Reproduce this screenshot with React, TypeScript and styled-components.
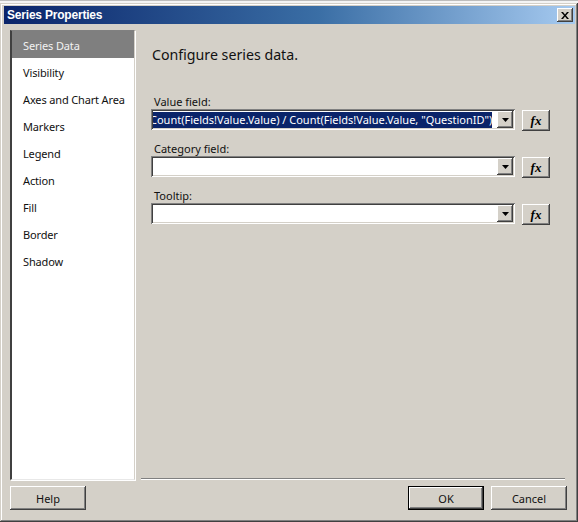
import React from "react";
import styled, { createGlobalStyle } from "styled-components";

const Global = createGlobalStyle`
  html, body { margin: 0; padding: 0; background: #ffffff; }
  body { font-family: "Noto Sans", "Liberation Sans", sans-serif; }
  * { box-sizing: border-box; }
`;

const TopStrip = styled.div`
  height: 3px;
  background: #f4f4f4;
  border-top: 1px solid #bdbdbd;
`;

const Window = styled.div`
  width: 578px;
  height: 519px;
  background: #d4d0c8;
  padding: 3px 3px 4px 4px;
  display: flex;
  flex-direction: column;
  box-shadow: inset -1px -1px #404040, inset 1px 1px #d4d0c8,
    inset -2px -2px #808080, inset 2px 2px #ffffff;
`;

const TitleBar = styled.div`
  height: 18px;
  flex: none;
  display: flex;
  align-items: center;
  justify-content: space-between;
  padding: 0 2px 0 3px;
  background: linear-gradient(to right, #0a246a 0%, #3a6ea5 55%, #a6caf0 100%);
`;

const Title = styled.span`
  color: #ffffff;
  font-family: "Liberation Sans", Arial, sans-serif;
  font-weight: bold;
  font-size: 12px;
  letter-spacing: -0.2px;
`;

const CloseBtn = styled.div`
  width: 16px;
  height: 14px;
  background: #d4d0c8;
  display: flex;
  align-items: center;
  justify-content: center;
  box-shadow: inset -1px -1px #404040, inset 1px 1px #ffffff,
    inset -2px -2px #808080;
`;

const Body = styled.div`
  flex: 1;
  display: flex;
  flex-direction: column;
  padding: 6px 0 0 6px;
`;

const Top = styled.div`
  height: 450px;
  display: flex;
`;

const Nav = styled.div`
  width: 125px;
  height: 450px;
  background: #ffffff;
  border-top: 1px solid #808080;
  border-left: 2px solid #404040;
  border-right: 1px solid #d4d0c8;
  border-bottom: 1px solid #e8e8e8;
  box-shadow: 1px 1px 0 #ffffff;
  display: flex;
  flex-direction: column;
`;

const NavItem = styled.div<{ $selected?: boolean }>`
  height: 27px;
  display: flex;
  align-items: center;
  padding: 2px 0 0 11px;
  font-size: 11px;
  letter-spacing: -0.15px;
  color: ${(p) => (p.$selected ? "#f2f2f2" : "#111111")};
  background: ${(p) => (p.$selected ? "#7f7f7f" : "transparent")};
`;

const Content = styled.div`
  flex: 1;
  display: flex;
  flex-direction: column;
  padding-left: 16px;
`;

const Heading = styled.div`
  font-size: 14.2px;
  color: #111111;
  margin: 15px 0 0 1px;
  height: 24px;
`;

const Fields = styled.div`
  margin-top: 24px;
  display: flex;
  flex-direction: column;
`;

const Label = styled.div`
  font-size: 11px;
  color: #111111;
  height: 16px;
  padding-left: 3px;
  display: flex;
  align-items: center;
`;

const FieldRow = styled.div`
  display: flex;
  align-items: flex-start;
  gap: 7px;
  margin-bottom: 9px;
`;

const Combo = styled.div`
  width: 364px;
  height: 21px;
  background: #ffffff;
  display: flex;
  align-items: stretch;
  padding: 2px;
  box-shadow: inset 1px 1px #808080, inset -1px -1px #ffffff,
    inset 2px 2px #404040, inset -2px -2px #d4d0c8;
`;

const ComboText = styled.div`
  flex: 1;
  overflow: hidden;
  display: flex;
  align-items: center;
  min-width: 0;
`;

const Selected = styled.span`
  white-space: nowrap;
  background: #0a246a;
  color: #ffffff;
  font-size: 11px;
  line-height: 16px;
  margin-left: -3px;
`;

const DropBtn = styled.div`
  width: 16px;
  flex: none;
  background: #d4d0c8;
  display: flex;
  align-items: center;
  justify-content: center;
  box-shadow: inset -1px -1px #404040, inset 1px 1px #ffffff,
    inset -2px -2px #808080;
`;

const FxBtn = styled.div`
  width: 28px;
  height: 21px;
  margin-top: 1px;
  background: #d4d0c8;
  display: flex;
  align-items: center;
  justify-content: center;
  font-family: "Liberation Serif", "Times New Roman", serif;
  font-style: italic;
  font-weight: bold;
  font-size: 13px;
  color: #000;
  box-shadow: inset -1px -1px #404040, inset 1px 1px #ffffff,
    inset -2px -2px #808080;
`;

const Separator = styled.div`
  margin: auto 10px 0 -10px;
  height: 2px;
  border-top: 1px solid #808080;
  border-bottom: 1px solid #ffffff;
`;

const Footer = styled.div`
  display: flex;
  align-items: center;
  margin-top: 6px;
  padding-right: 8px;
  gap: 7px;
`;

const Spacer = styled.div`
  flex: 1;
`;

const Button = styled.div<{ $default?: boolean }>`
  width: 76px;
  height: 24px;
  display: flex;
  align-items: center;
  justify-content: center;
  font-size: 11px;
  color: #111111;
  background: #d4d0c8;
  box-shadow: ${(p) =>
    p.$default
      ? "inset 0 0 0 1px #000, inset -2px -2px #404040, inset 2px 2px #ffffff, inset -3px -3px #808080"
      : "inset -1px -1px #404040, inset 1px 1px #ffffff, inset -2px -2px #808080"};
`;

const Arrow = () => (
  <svg width="7" height="4" viewBox="0 0 7 4">
    <path d="M0 0h7L3.5 4z" fill="#000" />
  </svg>
);

const CloseIcon = () => (
  <svg width="8" height="7" viewBox="0 0 8 7">
    <path d="M0 0h2l2 2.5L6 0h2L5 3.5 8 7H6L4 4.5 2 7H0l3-3.5z" fill="#000" />
  </svg>
);

const navItems = [
  "Series Data",
  "Visibility",
  "Axes and Chart Area",
  "Markers",
  "Legend",
  "Action",
  "Fill",
  "Border",
  "Shadow",
];

const fields = [
  {
    label: "Value field:",
    value:
      'Count(Fields!Value.Value) / Count(Fields!Value.Value, "QuestionID")',
  },
  { label: "Category field:", value: "" },
  { label: "Tooltip:", value: "" },
];

export default function App() {
  return (
    <>
      <Global />
      <TopStrip />
      <Window>
        <TitleBar>
          <Title>Series Properties</Title>
          <CloseBtn>
            <CloseIcon />
          </CloseBtn>
        </TitleBar>
        <Body>
          <Top>
            <Nav>
              {navItems.map((n, i) => (
                <NavItem key={n} $selected={i === 0}>
                  {n}
                </NavItem>
              ))}
            </Nav>
            <Content>
              <Heading>Configure series data.</Heading>
              <Fields>
                {fields.map((f) => (
                  <div key={f.label}>
                    <Label>{f.label}</Label>
                    <FieldRow>
                      <Combo>
                        <ComboText>
                          {f.value && <Selected>{f.value}</Selected>}
                        </ComboText>
                        <DropBtn>
                          <Arrow />
                        </DropBtn>
                      </Combo>
                      <FxBtn>fx</FxBtn>
                    </FieldRow>
                  </div>
                ))}
              </Fields>
              <Separator />
            </Content>
          </Top>
          <Footer>
            <Button>Help</Button>
            <Spacer />
            <Button $default>OK</Button>
            <Button>Cancel</Button>
          </Footer>
        </Body>
      </Window>
    </>
  );
}
